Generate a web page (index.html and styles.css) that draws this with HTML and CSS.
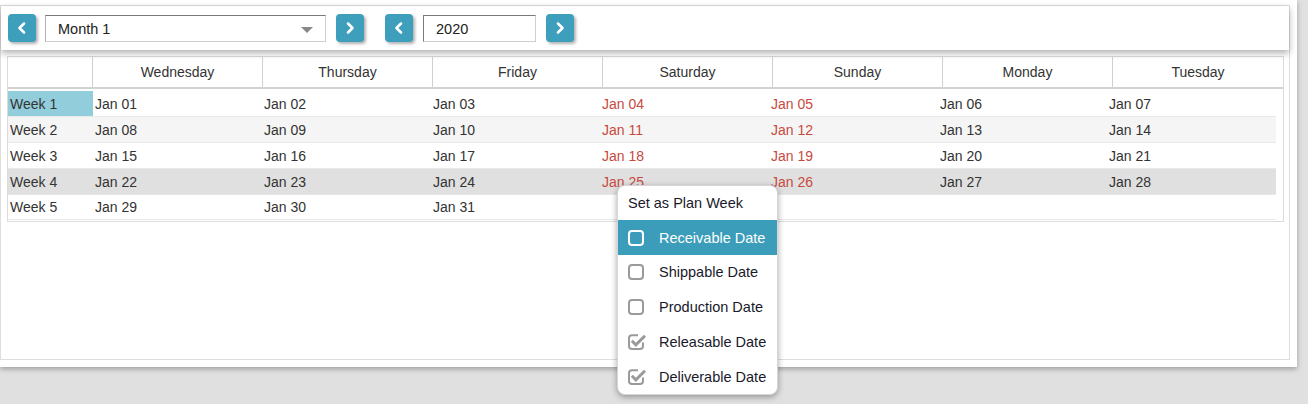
FILE: index.html
```html
<!DOCTYPE html>
<html>
<head>
<meta charset="utf-8">
<link rel="stylesheet" href="styles.css">
</head>
<body>
<div class="panel">
  <div class="frame">
    <div class="toolbar">
      <button class="nav"><svg viewBox="0 0 12 12" width="12" height="12"><polyline points="8,1.5 3.5,6 8,10.5"/></svg></button>
      <div class="select"><span>Month 1</span><span class="caret"></span></div>
      <button class="nav"><svg viewBox="0 0 12 12" width="12" height="12"><polyline points="4,1.5 8.5,6 4,10.5"/></svg></button>
      <button class="nav gap"><svg viewBox="0 0 12 12" width="12" height="12"><polyline points="8,1.5 3.5,6 8,10.5"/></svg></button>
      <div class="year">2020</div>
      <button class="nav"><svg viewBox="0 0 12 12" width="12" height="12"><polyline points="4,1.5 8.5,6 4,10.5"/></svg></button>
    </div>
    <div class="grid">
      <div class="head">
        <div class="hc"></div>
        <div class="hc">Wednesday</div>
        <div class="hc">Thursday</div>
        <div class="hc">Friday</div>
        <div class="hc">Saturday</div>
        <div class="hc">Sunday</div>
        <div class="hc">Monday</div>
        <div class="hc last">Tuesday</div>
      </div>
      <div class="body">
        <div class="row">
          <div class="c wk sel">Week 1</div><div class="c">Jan 01</div><div class="c">Jan 02</div><div class="c">Jan 03</div><div class="c we">Jan 04</div><div class="c we">Jan 05</div><div class="c">Jan 06</div><div class="c">Jan 07</div>
        </div>
        <div class="row alt">
          <div class="c wk">Week 2</div><div class="c">Jan 08</div><div class="c">Jan 09</div><div class="c">Jan 10</div><div class="c we">Jan 11</div><div class="c we">Jan 12</div><div class="c">Jan 13</div><div class="c">Jan 14</div>
        </div>
        <div class="row">
          <div class="c wk">Week 3</div><div class="c">Jan 15</div><div class="c">Jan 16</div><div class="c">Jan 17</div><div class="c we">Jan 18</div><div class="c we">Jan 19</div><div class="c">Jan 20</div><div class="c">Jan 21</div>
        </div>
        <div class="row hover">
          <div class="c wk">Week 4</div><div class="c">Jan 22</div><div class="c">Jan 23</div><div class="c">Jan 24</div><div class="c we">Jan 25</div><div class="c we">Jan 26</div><div class="c">Jan 27</div><div class="c">Jan 28</div>
        </div>
        <div class="row lastrow">
          <div class="c wk">Week 5</div><div class="c">Jan 29</div><div class="c">Jan 30</div><div class="c">Jan 31</div><div class="c"></div><div class="c"></div><div class="c"></div><div class="c"></div>
        </div>
      </div>
    </div>
  </div>
</div>
<div class="menu">
  <div class="mi title">Set as Plan Week</div>
  <div class="mi active"><svg class="cb" viewBox="0 0 18 16" width="18" height="16"><rect x="1" y="1" width="14" height="14" rx="3"/></svg><span>Receivable Date</span></div>
  <div class="mi short"><svg class="cb" viewBox="0 0 18 16" width="18" height="16"><rect x="1" y="1" width="14" height="14" rx="3"/></svg><span>Shippable Date</span></div>
  <div class="mi"><svg class="cb" viewBox="0 0 18 16" width="18" height="16"><rect x="1" y="1" width="14" height="14" rx="3"/></svg><span>Production Date</span></div>
  <div class="mi"><svg class="cb on" viewBox="0 0 18 16" width="18" height="16"><path d="M10 1.2H4A3 3 0 0 0 1 4.2v7.8a3 3 0 0 0 3 3h8a3 3 0 0 0 3-3V8.5"/><path class="tick" d="M3.8 6.8l4 4L17 1.8"/></svg><span>Releasable Date</span></div>
  <div class="mi"><svg class="cb on" viewBox="0 0 18 16" width="18" height="16"><path d="M10 1.2H4A3 3 0 0 0 1 4.2v7.8a3 3 0 0 0 3 3h8a3 3 0 0 0 3-3V8.5"/><path class="tick" d="M3.8 6.8l4 4L17 1.8"/></svg><span>Deliverable Date</span></div>
</div>
</body>
</html>
```
FILE: styles.css
```css
html, body {
  margin: 0;
  padding: 0;
}
body {
  background: #e0e0e0;
  width: 1308px;
  height: 404px;
  overflow: hidden;
  position: relative;
  font-family: "Liberation Sans", Arial, sans-serif;
  font-size: 14px;
  color: #333;
}
.panel {
  width: 1297px;
  height: 367px;
  box-sizing: border-box;
  background: #fff;
  padding: 5px 7px 7px 0;
  box-shadow: 0 2px 5px rgba(0, 0, 0, 0.3);
}
.frame {
  height: 100%;
  box-sizing: border-box;
  border: 1px solid #dedede;
  display: flex;
  flex-direction: column;
}
.toolbar {
  height: 44px;
  box-sizing: border-box;
  display: flex;
  align-items: flex-start;
  padding: 8px 0 0 7px;
  box-shadow: 0 3px 7px rgba(0, 0, 0, 0.32);
  position: relative;
  z-index: 1;
}
.nav {
  width: 28px;
  height: 28px;
  padding: 0;
  border: none;
  border-radius: 4px;
  background: #3d9fbc;
  box-shadow: 2px 2px 3px rgba(0, 0, 0, 0.3);
  display: flex;
  align-items: center;
  justify-content: center;
  margin-right: 9px;
}
.nav svg polyline {
  fill: none;
  stroke: #fff;
  stroke-width: 2.5;
  stroke-linecap: round;
  stroke-linejoin: round;
}
.nav.gap {
  margin-left: 12px;
  margin-right: 10px;
}
.select {
  width: 281px;
  height: 27px;
  margin-top: 1px;
  box-sizing: border-box;
  border: 1px solid #cfcfcf;
  border-top-color: #7a7a7a;
  border-left-color: #b0b0b0;
  display: flex;
  align-items: center;
  justify-content: space-between;
  padding: 0 12px 0 12px;
  font-size: 14.5px;
  color: #222;
  margin-right: 10px;
}
.caret {
  width: 0;
  height: 0;
  border-left: 6px solid transparent;
  border-right: 6px solid transparent;
  border-top: 6px solid #888;
  margin-top: 2px;
}
.year {
  width: 113px;
  height: 27px;
  margin-top: 1px;
  box-sizing: border-box;
  border: 1px solid #cfcfcf;
  border-top-color: #7a7a7a;
  border-left-color: #7a7a7a;
  display: flex;
  align-items: center;
  padding-left: 12px;
  font-size: 14.5px;
  color: #222;
  margin-right: 10px;
}
.grid {
  margin: 6px 0 0 6px;
  width: 1277px;
  box-sizing: border-box;
  border: 1px solid #dcdcdc;
  padding-bottom: 1px;
}
.head {
  display: grid;
  grid-template-columns: 85px repeat(7, 170px);
  height: 32px;
  box-sizing: border-box;
  border-bottom: 2px solid #d2d2d2;
}
.hc {
  border-right: 1px solid #d0d0d0;
  display: flex;
  align-items: center;
  justify-content: center;
  color: #333;
}
.hc.last {
  border-right: none;
}
.body {
  padding-top: 2px;
  width: 1268px;
}
.row {
  display: grid;
  grid-template-columns: 85px repeat(7, 169px);
  height: 26px;
  box-sizing: border-box;
  border-bottom: 1px solid #e8e8e8;
}
.row.alt {
  background: #f5f5f5;
}
.row.hover {
  background: #e0e0e0;
}
.row.lastrow {
  height: 25px;
}
.c {
  padding-left: 2px;
  display: flex;
  align-items: center;
  color: #333;
}
.c.sel {
  background: #92cddc;
}
.c.we {
  color: #c8493f;
}
.menu {
  position: absolute;
  left: 617px;
  top: 185px;
  width: 161px;
  height: 210px;
  box-sizing: border-box;
  background: #fff;
  border: 1px solid #d6d6d6;
  border-radius: 8px;
  box-shadow: 0 2px 6px rgba(0, 0, 0, 0.35);
  overflow: hidden;
  z-index: 5;
}
.mi {
  height: 35px;
  display: flex;
  align-items: center;
  padding-left: 10px;
  font-size: 14.5px;
  color: #1a1a2a;
}
.mi.title {
  height: 34px;
}
.mi.short {
  height: 34px;
}
.mi span {
  margin-left: 13px;
}
.mi.active {
  background: #3b9dba;
  color: #fff;
}
.cb {
  overflow: visible;
}
.cb rect {
  fill: #fff;
  stroke: #9a9a9a;
  stroke-width: 2;
}
.mi.active .cb rect {
  fill: none;
  stroke: #fff;
}
.cb.on path {
  fill: none;
  stroke: #9a9a9a;
  stroke-width: 2;
  stroke-linejoin: round;
}
.cb.on path.tick {
  stroke-width: 3;
  stroke-linecap: butt;
  stroke-linejoin: miter;
}
```
